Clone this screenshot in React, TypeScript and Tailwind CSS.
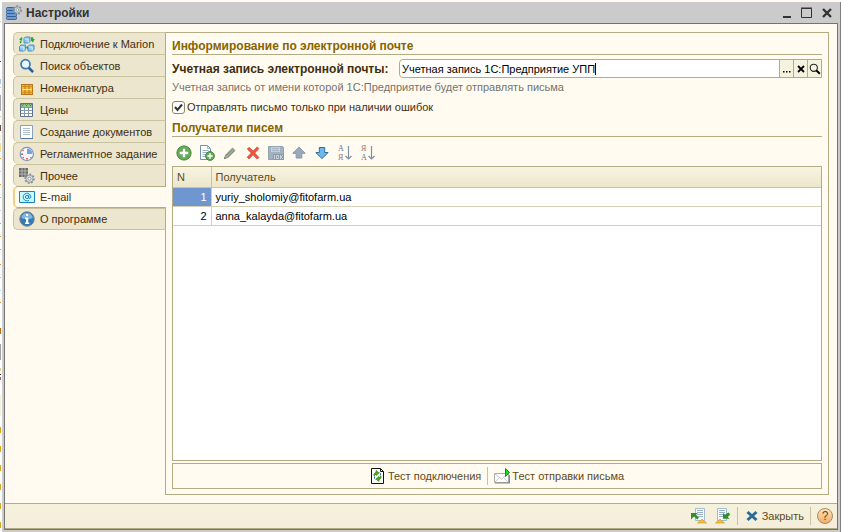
import React, { useState } from "react";

type IconProps = { children: React.ReactNode; size?: string };

function Icon({ children, size = "size-4" }: IconProps) {
  return (
    <svg viewBox="0 0 16 16" className={`${size} shrink-0`} aria-hidden="true">
      {children}
    </svg>
  );
}

function Gear({ x, y, r, fill = "#d7dce2" }: { x: number; y: number; r: number; fill?: string }) {
  return (
    <g transform={`translate(${x} ${y})`}>
      <circle r={r} fill="none" stroke="#858b93" strokeWidth="2" strokeDasharray="1.7 1.5" />
      <circle r={r - 0.6} fill={fill} stroke="#858b93" strokeWidth=".8" />
      <circle r={r * 0.36} fill="#fff" stroke="#858b93" strokeWidth=".8" />
    </g>
  );
}

function AppIcon() {
  return (
    <Icon>
      <g fill="#6b9bd0" stroke="#2c5b94" strokeWidth=".9">
        <rect x=".5" y="2.5" width="8" height="3" rx="1" />
        <rect x=".5" y="5.5" width="9" height="3" rx="1" />
        <rect x=".5" y="8.5" width="10" height="3" rx="1" />
        <rect x=".5" y="11.5" width="10" height="3" rx="1" />
      </g>
      <Gear x={11.3} y={5} r={3.7} />
    </Icon>
  );
}

function ConnectIcon() {
  return (
    <Icon>
      <g fill="#8ecbf1" stroke="#3e86bd" strokeWidth=".9" strokeLinejoin="round">
        <path d="M5 2.4 6.4 1H11v4.6L9.6 7H5zM.6 10.4 2 9h4.6v4.6L5.2 15H.6zM9 10.4 10.4 9H15v4.6L13.6 15H9z" />
        <path d="M5.6 3h3.6v3.6M1.2 11h3.6v3.6M9.6 11h3.6v3.6" fill="none" stroke="#d9f1ff" />
      </g>
      <path d="M0 3.5 3.2.8v4zM.8 7.6V5l1.6-.4V7zM12 1.2h2.2V3h1.6l-2 3.4L11.6 4H12zM6.8 11.6l2.2-1.8v3.8z" fill="#27a636" />
    </Icon>
  );
}

function SearchIcon() {
  return (
    <Icon>
      <path d="m9.5 9.5 4.6 4.6" stroke="#285f91" strokeWidth="2.6" />
      <circle cx="6.5" cy="6.2" r="4.5" fill="#e8f7ff" stroke="#3a7ab0" strokeWidth="1.7" />
      <path d="M4 6c0-1.5 1-2.2 2.4-2.2" stroke="#fff" fill="none" />
    </Icon>
  );
}

function GoodsIcon() {
  return (
    <Icon>
      <path d="M2 4h12v11H2z" fill="#b8761a" />
      <path d="M3 5h2.5v9H3zM6.5 5h3v9h-3zM10.5 5H13v9h-2.5z" fill="#f0b53a" />
      <path d="M2 6.5h12M2 12.5h12" stroke="#c98a1c" strokeWidth=".8" />
      <path d="M3 9.5h10" stroke="#ffe393" />
    </Icon>
  );
}

function PricesIcon() {
  return (
    <Icon>
      <path d="M1.5 1.5h12v13h-12z" fill="#fff" stroke="#5b738a" />
      <path d="M2 2h11v3H2z" fill="#8fc484" />
      <path d="M2 5.5h11M2 8.5h11M2 11.5h11M5.5 5v9M9.5 5v9" stroke="#8098ae" />
      <path d="m2.5 2.5 1 1 1-1M6.5 2.5l1 1 1-1M10.5 2.5l1 1 1-1" stroke="#1c6e20" fill="none" />
    </Icon>
  );
}

function DocumentIcon() {
  return (
    <Icon>
      <path d="M1.5 1.5h12v13h-12z" fill="#fff" stroke="#8aa0b6" />
      <path d="M4 4.5h7M4 6.5h7M4 8.5h7M4 10.5h7" stroke="#aebfce" />
      <path d="M2 14.5h12" stroke="#56789b" />
    </Icon>
  );
}

function ClockIcon() {
  return (
    <Icon>
      <circle cx="7.8" cy="8" r="6.6" fill="#f5f8ff" stroke="#8298b8" strokeWidth="1.2" />
      <path d="M8 8V2.4A5.6 5.6 0 0 1 13.4 8z" fill="#829ddc" />
      <path d="M2.3 7.3h1.6v1.6H2.3zM7.2 12h1.6v1.6H7.2zM3.5 3.8h1.2V5H3.5zM3.7 11h1.2v1.2H3.7zM11.2 11h1.2v1.2h-1.2z" fill="#e0473d" />
    </Icon>
  );
}

function OtherIcon() {
  return (
    <Icon>
      <path d="M0 0h9v9H0z" fill="#666a6e" />
      <path d="M0 3h9M0 6h9M3 0v9M6 0v9" stroke="#c5c5b9" strokeWidth=".8" />
      <Gear x={10.5} y={10.7} r={4.2} />
    </Icon>
  );
}

function MailIcon() {
  return (
    <Icon>
      <path d="M.5 2.5h15v11H.5z" fill="#c8fbff" stroke="#1687b5" />
      <circle cx="8" cy="8" r="1.6" fill="none" stroke="#1679b5" strokeWidth=".9" />
      <path d="M9.8 6v3c.3 1.1 2 .6 2-1.2A3.8 3.8 0 1 0 10 11.3" fill="none" stroke="#1679b5" strokeWidth=".9" />
    </Icon>
  );
}

function InfoIcon() {
  return (
    <Icon>
      <circle cx="8" cy="8" r="7.2" fill="#347ab5" stroke="#767f89" />
      <path d="M2.3 6.7a5.8 5.8 0 0 1 11.4 0C10 9 6 9 2.3 6.7" fill="#80b7df" />
      <path d="M7 3h2.2v2H7zM6 6.5h3.2v5h1V13H6v-1.5h1V8H6z" fill="#fff" />
    </Icon>
  );
}

function PlusBadge({ x, y, r }: { x: number; y: number; r: number }) {
  return (
    <g transform={`translate(${x} ${y})`}>
      <circle r={r} fill="#62ad55" stroke="#3a7b36" strokeWidth=".9" />
      <path d={`M${-r * 0.6} 0h${r * 1.2}M0 ${-r * 0.6}v${r * 1.2}`} stroke="#fff" strokeWidth={r * 0.33} />
    </g>
  );
}

function AddIcon() {
  return <Icon><PlusBadge x={8} y={8} r={7.1} /></Icon>;
}

function CopyIcon() {
  return (
    <Icon>
      <path d="M1.5.5h7l3 3v11h-10z" fill="#fff" stroke="#7992a9" />
      <path d="M8.5.5v3h3M3.5 5.5h6M3.5 7.5h5M3.5 9.5h4M3.5 11.5h3" fill="none" stroke="#9bb0c2" />
      <PlusBadge x={11} y={11} r={4.4} />
    </Icon>
  );
}

function EditIcon() {
  return (
    <Icon>
      <path d="m2 14 1-4 7.5-7.5 3 3L6 13z" fill="#9ca79a" />
      <path d="m4 10.5 7-7M6 12.2l6.7-6.7" stroke="#7e8d80" />
      <path d="m2 14 .6-2.3 1.7 1.7z" fill="#687269" />
    </Icon>
  );
}

function DeleteIcon() {
  return (
    <Icon>
      <path d="m2.3 4.1 1.8-1.8L8 6.1l4.3-4.2 1.5 1.8L9.7 8l4.2 4.5-1.6 1.6L8 9.8l-4 4.1-1.8-1.7L6.3 8z" fill="#f3543f" stroke="#c8392c" strokeWidth=".7" />
    </Icon>
  );
}

function SaveIcon() {
  return (
    <Icon>
      <path d="M.5 1.5h14l1 1v12H.5z" fill="#a3b1be" stroke="#94a3b1" />
      <path d="M3 2h9v5H3z" fill="#c9d2da" />
      <path d="M4 3.5h7M4 5.5h7" stroke="#a5b3c0" />
      <path d="M5 9h11v6H5z" fill="#8b9bab" />
      <path d="M6.5 10v4M8.5 10.5h2v3h-2zM12.5 10v4M15 10l-2 2 2 2" stroke="#d7e0e7" fill="none" strokeWidth=".8" />
    </Icon>
  );
}

function ArrowIcon({ down = false }: { down?: boolean }) {
  return (
    <Icon>
      {down ? (
        <path d="M5.3 2.5h5.4v5h3.5L8 13.6 1.8 7.5h3.5z" fill="#6db9ed" stroke="#316d9f" strokeLinejoin="round" />
      ) : (
        <path d="M8 2.2 14.2 8.3h-3.4V13H5.2V8.3H1.8z" fill="#9aaabc" stroke="#8796a7" strokeLinejoin="round" />
      )}
    </Icon>
  );
}

function SortIcon({ top, bottom }: { top: string; bottom: string }) {
  return (
    <svg viewBox="0 0 16 18" className="h-[18px] w-4 shrink-0" aria-hidden="true">
      <text x="1" y="7" fontFamily="Liberation Serif, serif" fontSize="8" fill={top === "А" ? "#607890" : "#a07068"}>{top}</text>
      <text x="1" y="16" fontFamily="Liberation Serif, serif" fontSize="8" fill={bottom === "А" ? "#607890" : "#a07068"}>{bottom}</text>
      <path d="M11.5 2v13M8.5 12l3 3 3-3" fill="none" stroke="#7f90a2" strokeWidth="1.2" />
    </svg>
  );
}

function RefreshDocIcon() {
  return (
    <Icon>
      <path d="M1.5.5h9l3 3v12h-12z" fill="#fff" stroke="#111" />
      <path d="M10.5.5v3h3" fill="none" stroke="#111" />
      <path d="M4 8V6l2-2V2.5L9 5 6 7.5V6L4 8zM11 8v2l-2 2v1.5L6 11l3-2.5V10z" fill="#4cae14" stroke="#2f8412" strokeWidth=".7" />
      <path d="M4.5 8.5v2l1 1M10.5 7.5v-2l-1-1" stroke="#2675a4" fill="none" />
    </Icon>
  );
}

function SendMailIcon() {
  return (
    <Icon>
      <path d="M.5 5.5h14v9H.5z" fill="#fff" stroke="#aaa" />
      <path d="M1 15h14.5V7" fill="none" stroke="#888" strokeWidth="1.2" />
      <path d="m1 6 6.5 5L14 6M1 14l4.5-4.5M14 14 9.5 9.5" fill="none" stroke="#bbb" strokeWidth=".8" />
      <path d="m11.5.5 4 4-4 4z" fill="#12df18" stroke="#0c9912" />
    </Icon>
  );
}

function TransferIcon({ incoming = false }: { incoming?: boolean }) {
  return (
    <Icon>
      <path d={incoming ? "M2.5.5h9v12h-9z" : "M4.5.5h9v12h-9z"} fill="#f7fbff" stroke="#a5bbce" />
      <path d={incoming ? "M4 2.5h6M4 4.5h6M4 6.5h6M4 8.5h6" : "M6 2.5h6M6 4.5h6M6 6.5h6M6 8.5h6"} stroke="#97b0c5" />
      {incoming ? (
        <path d="m13.4 4.5 1.8 1.8-2.4 2.6 1.7 1.8H8V4.9l1.8 1.8z" fill="#2f8f2f" />
      ) : (
        <path d="M0 5h6.6L5 6.8l3 2.9L6.2 11.500 3 8.600 0 11.500z" fill="#2f8f2f" />
      )}
      <path d={incoming ? "m.5 15 4.500-3.800L9.500 15z" : "m6.500 15 4.500-3.800 4.500 3.800z"} fill="#f4bf3a" stroke="#d59820" strokeWidth=".7" />
    </Icon>
  );
}

const edgeMarks = [
  { y: 21, h: 1, color: "#d9d0b0" },
  { y: 61, h: 1, color: "#1f4a3a" },
  { y: 79, h: 5, color: "#a9c4e6" },
  { y: 87, h: 1, color: "#c9c3a0" },
  { y: 95, h: 16, color: "#a9a9a9" },
  { y: 116, h: 1, color: "#c9c3a0" },
  { y: 125, h: 6, color: "#6b4a3a" },
  { y: 135, h: 6, color: "#f5efdc" },
  { y: 143, h: 9, color: "#fbdc94" },
  { y: 158, h: 1, color: "#e0a040" },
  { y: 171, h: 1, color: "#b9cfe6" },
  { y: 184, h: 1, color: "#e0a040" },
  { y: 197, h: 1, color: "#e0a040" },
  { y: 210, h: 1, color: "#b9cfe6" },
  { y: 223, h: 1, color: "#e0a040" },
  { y: 236, h: 1, color: "#e0a040" },
  { y: 249, h: 1, color: "#e0a040" },
  { y: 264, h: 1, color: "#e08a30" },
  { y: 277, h: 1, color: "#f0b050" },
  { y: 290, h: 1, color: "#b9cfe6" },
  { y: 302, h: 1, color: "#e08a30" },
  { y: 328, h: 6, color: "#b96a10" },
  { y: 344, h: 16, color: "#a0a0a0" },
  { y: 368, h: 3, color: "#e6cf9a" },
  { y: 374, h: 1, color: "#222222" },
  { y: 377, h: 3, color: "#a86a6a" },
  { y: 395, h: 21, color: "#f3eeda" },
  { y: 427, h: 6, color: "#d6a81a" },
  { y: 446, h: 6, color: "#d6a81a" },
  { y: 465, h: 6, color: "#d6a81a" },
  { y: 484, h: 6, color: "#d6a81a" },
  { y: 503, h: 6, color: "#d6a81a" },
  { y: 522, h: 6, color: "#d6a81a" },
];

const tabs = [
  { label: "Подключение к Marion", icon: <ConnectIcon /> },
  { label: "Поиск объектов", icon: <SearchIcon /> },
  { label: "Номенклатура", icon: <GoodsIcon /> },
  { label: "Цены", icon: <PricesIcon /> },
  { label: "Создание документов", icon: <DocumentIcon /> },
  { label: "Регламентное задание", icon: <ClockIcon /> },
  { label: "Прочее", icon: <OtherIcon /> },
  { label: "E-mail", icon: <MailIcon /> },
  { label: "О программе", icon: <InfoIcon /> },
];

const tools = [
  { label: "Добавить", icon: <AddIcon /> },
  { label: "Скопировать", icon: <CopyIcon /> },
  { label: "Изменить", icon: <EditIcon /> },
  { label: "Удалить", icon: <DeleteIcon /> },
  { label: "Сохранить", icon: <SaveIcon /> },
  { label: "Переместить вверх", icon: <ArrowIcon /> },
  { label: "Переместить вниз", icon: <ArrowIcon down /> },
  { label: "Сортировать по возрастанию", icon: <SortIcon top="А" bottom="Я" /> },
  { label: "Сортировать по убыванию", icon: <SortIcon top="Я" bottom="А" /> },
];

const recipients = ["yuriy_sholomiy@fitofarm.ua", "anna_kalayda@fitofarm.ua"];

const fieldButton = "flex w-3.5 items-center justify-center border-l border-[#b3ab82] bg-[#f5f2dd]";

export default function App() {
  const [account, setAccount] = useState("Учетная запись 1С:Предприятие УПП");
  const [errorsOnly, setErrorsOnly] = useState(true);

  return (
    <div className="flex h-screen bg-[#fffbf0] font-['Liberation_Sans',Arial,sans-serif] text-[11px] leading-4 text-[#3f2f10]">
      <svg className="h-full w-0.5 shrink-0 bg-white" aria-hidden="true">
        {edgeMarks.map((mark) => (
          <rect key={mark.y} x="0" y={mark.y} width="1" height={mark.h} fill={mark.color} />
        ))}
      </svg>
      <div className="mt-0.5 flex min-w-0 flex-1 flex-col border-r border-[#808080] bg-[#cbcbcb] pr-0.5 pb-0.5 pl-0.5">
        <header className="flex h-[21px] shrink-0 items-center pt-px pl-0.5">
          <AppIcon />
          <h1 className="ml-1 flex-1 text-[12px] font-bold text-[#333]">Настройки</h1>
          <div className="flex items-center gap-1 pr-[3px] text-[#333]">
            <button aria-label="Свернуть" className="size-4">
              <Icon><path d="M4 12h8" stroke="currentColor" strokeWidth="2" /></Icon>
            </button>
            <button aria-label="Развернуть" className="size-4">
              <Icon><path d="M2.5 3.5h10v9h-10zM2 3h11" fill="none" stroke="currentColor" /></Icon>
            </button>
            <button aria-label="Закрыть окно" className="size-4">
              <Icon><path d="m4 4 8 8m0-8-8 8" stroke="currentColor" strokeWidth="2.4" /></Icon>
            </button>
          </div>
        </header>

        <div className="flex min-h-0 flex-1 flex-col border border-[#737373] bg-[#fffbf0]">
          <main className="flex min-h-0 flex-1 p-2">
            <nav className="z-10 -mr-px flex w-[153px] shrink-0 flex-col" aria-label="Разделы">
              {tabs.map((tab) =>
                tab.label === "E-mail" ? (
                  <button key={tab.label} aria-current="page" className="flex h-[22px] items-center gap-[5px] rounded-l-[5px] border-y border-l-2 border-y-[#b3ab82] border-l-[#f3cf86] bg-[#fffbf0] pl-1 text-left whitespace-nowrap">
                    {tab.icon}
                    {tab.label}
                  </button>
                ) : (
                  <button key={tab.label} className="flex h-[22px] items-center gap-[5px] rounded-l-[5px] border-t border-r border-l border-[#c9c3a0] border-r-[#b3ab82] bg-[#ebe6cd] pl-[5px] text-left whitespace-nowrap last:border-b">
                    {tab.icon}
                    {tab.label}
                  </button>
                ),
              )}
            </nav>

            <section className="flex min-w-0 flex-1 flex-col border border-[#b3ab82] px-1.5 pt-1.5 pb-[5px]">
              <h2 className="border-b border-[#b3ab82] text-[12px] leading-[15px] font-bold text-[#876400]">
                Информирование по электронной почте
              </h2>
              <div className="mt-1 flex h-[19px] shrink-0 items-center">
                <label htmlFor="account" className="w-[227px] shrink-0 text-[12px] font-bold whitespace-nowrap">
                  Учетная запись электронной почты:
                </label>
                <div className="flex h-full min-w-0 flex-1 overflow-hidden rounded-l-[4px] border border-[#b3ab82] bg-white">
                  <div className="flex min-w-0 flex-1 items-center">
                    <input id="account" value={account} onChange={(e) => setAccount(e.target.value)} className="field-sizing-content min-w-0 pl-0.5 text-black outline-none" />
                    <span className="h-3 w-px bg-black" />
                  </div>
                  <button aria-label="Выбрать" className={fieldButton}>
                    <svg viewBox="0 0 10 10" className="size-2.5"><path d="M1 7h1.5v1.5H1zM4 7h1.5v1.5H4zM7 7h1.5v1.5H7z" /></svg>
                  </button>
                  <button aria-label="Очистить" className={fieldButton}>
                    <svg viewBox="0 0 10 10" className="size-2.5"><path d="m2 2 6 6m0-6L2 8" stroke="#000" strokeWidth="1.8" /></svg>
                  </button>
                  <button aria-label="Открыть" className={fieldButton}>
                    <svg viewBox="0 0 10 10" className="size-3"><circle cx="4" cy="4" r="3" fill="none" stroke="#222" strokeWidth=".9" /><path d="m6 6 3 3" stroke="#000" strokeWidth="1.6" /></svg>
                  </button>
                </div>
              </div>
              <p className="leading-[18px] text-[#77736c]">
                Учетная запись от имени которой 1С:Предприятие будет отправлять письма
              </p>
              <label className="mt-[3px] flex items-center gap-0.5 self-start">
                <span className="grid size-[13px] place-items-center">
                  <input type="checkbox" checked={errorsOnly} onChange={(e) => setErrorsOnly(e.target.checked)} className="peer col-start-1 row-start-1 size-[13px] appearance-none rounded-[3px] border border-[#8f8964] bg-white" />
                  <svg viewBox="0 0 9 9" className="pointer-events-none invisible col-start-1 row-start-1 size-[9px] peer-checked:visible"><path d="m1 4 2.5 3L8 1.5" fill="none" stroke="#333" strokeWidth="2" /></svg>
                </span>
                Отправлять письмо только при наличии ошибок
              </label>
              <h2 className="mt-1.5 border-b border-[#b3ab82] text-[12px] leading-[15px] font-bold text-[#876400]">
                Получатели писем
              </h2>
              <div className="flex h-[29px] shrink-0 items-center gap-[7px] pt-0.5 pl-1" role="toolbar" aria-label="Получатели">
                {tools.map((tool) => (
                  <button key={tool.label} aria-label={tool.label} className="flex">{tool.icon}</button>
                ))}
              </div>
              <div className="min-h-0 flex-1 border border-[#b3ab82] bg-white">
                <table className="w-full table-fixed border-collapse">
                  <thead>
                    <tr className="h-5 bg-linear-to-b from-[#f7f4e2] to-[#ece6ca] text-left text-[#5f4a18]">
                      <th className="w-[38px] border-r border-b border-[#c9c3a0] px-1 font-normal">N</th>
                      <th className="border-b border-[#c9c3a0] px-1 font-normal">Получатель</th>
                    </tr>
                  </thead>
                  <tbody className="text-black">
                    {recipients.map((email, index) => (
                      <tr key={email} className="h-[19px] border-b border-[#d5d0b4]">
                        <td className={index === 0 ? "border-r border-[#d5d0b4] bg-[#7096d0] px-1 text-right text-white" : "border-r border-[#d5d0b4] px-1 text-right"}>{index + 1}</td>
                        <td className="px-1">{email}</td>
                      </tr>
                    ))}
                  </tbody>
                </table>
              </div>
              <div className="mt-0.5 flex h-[26px] shrink-0 items-center justify-center gap-1.5 border border-[#b3ab82] text-[#5f4a18]">
                <button className="flex items-center gap-0.5"><RefreshDocIcon />Тест подключения</button>
                <span className="h-[18px] w-px bg-[#c9c3a0]" />
                <button className="flex items-center gap-0.5"><SendMailIcon />Тест отправки письма</button>
              </div>
            </section>
          </main>

          <footer className="flex h-[26px] shrink-0 items-center justify-end gap-1.5 border-y border-[#b3ab82] bg-linear-to-b from-[#f4f2dc] to-[#f6eddb] pr-1 text-[#5f4a18]">
            <button aria-label="Сохранить настройки" className="mr-0.5"><TransferIcon /></button>
            <button aria-label="Восстановить настройки"><TransferIcon incoming /></button>
            <span className="h-[18px] w-px bg-[#c9c3a0]" />
            <button className="flex items-center gap-0.5">
              <Icon><path d="m3.500 4 9 8m0-8-9 8" stroke="#286c99" strokeWidth="3" /></Icon>
              Закрыть
            </button>
            <span className="h-[18px] w-px bg-[#c9c3a0]" />
            <button aria-label="Справка" className="flex size-4 items-center justify-center rounded-full border border-[#a98766] bg-linear-to-b from-[#ffe4bd] to-[#f3ad65] text-[12px]">?</button>
          </footer>
        </div>
      </div>
    </div>
  );
}
